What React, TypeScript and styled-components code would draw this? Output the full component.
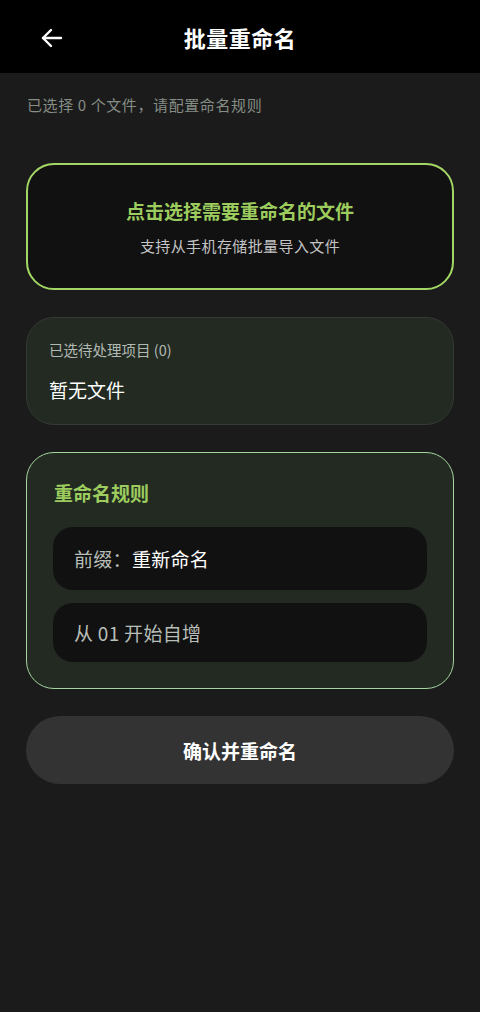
import React from 'react';
import styled, { createGlobalStyle } from 'styled-components';

const GlobalStyle = createGlobalStyle`
  html, body {
    margin: 0;
    padding: 0;
    background: #1b1b1b;
  }
  body {
    font-family: "Noto Sans CJK SC", "Noto Sans", sans-serif;
    -webkit-font-smoothing: antialiased;
  }
`;

const Page = styled.div`
  min-height: 1012px;
  background: #1b1b1b;
  display: flex;
  flex-direction: column;
`;

const Header = styled.header`
  height: 73px;
  background: #000;
  display: flex;
  align-items: center;
  position: relative;
  justify-content: center;
`;

const BackButton = styled.button`
  position: absolute;
  left: 38px;
  top: 24px;
  width: 28px;
  height: 28px;
  padding: 0;
  border: none;
  background: none;
  display: flex;
  align-items: center;
  justify-content: center;
  cursor: pointer;
`;

const Title = styled.h1`
  margin: 0;
  color: #fff;
  font-size: 22px;
  font-weight: 700;
  letter-spacing: 0.5px;
`;

const Body = styled.main`
  padding: 0 26px;
  display: flex;
  flex-direction: column;
`;

const Hint = styled.p`
  margin: 22px 0 0 1px;
  color: #858d85;
  font-size: 15px;
  line-height: 20px;
  letter-spacing: 0.6px;
`;

const PickCard = styled.div`
  margin-top: 48px;
  height: 127px;
  box-sizing: border-box;
  border: 2px solid #a3d765;
  border-radius: 28px;
  background: #111;
  display: flex;
  flex-direction: column;
  align-items: center;
  justify-content: center;
  gap: 12px;
  cursor: pointer;
`;

const PickTitle = styled.div`
  color: #9dcc5e;
  font-size: 19px;
  font-weight: 700;
  line-height: 26px;
`;

const PickSub = styled.div`
  color: #c4c4c4;
  font-size: 15px;
  line-height: 20px;
  letter-spacing: 0.4px;
`;

const Panel = styled.section<{ $accent?: boolean }>`
  box-sizing: border-box;
  background: #222a22;
  border: ${(p) => (p.$accent ? '1.5px solid #a6d6a0' : '1px solid #343a34')};
  border-radius: 28px;
  display: flex;
  flex-direction: column;
`;

const ListPanel = styled(Panel)`
  margin-top: 27px;
  height: 108px;
  padding: 22px 22px 0;
`;

const ListLabel = styled.div`
  color: #b2b9b2;
  font-size: 14.5px;
  line-height: 20px;
`;

const EmptyText = styled.div`
  margin-top: 17px;
  color: #fff;
  font-size: 19px;
  line-height: 26px;
`;

const RulePanel = styled(Panel)`
  margin-top: 27px;
  height: 237px;
  padding: 27px 26px 0 26px;
`;

const RuleTitle = styled.div`
  margin-left: 1px;
  color: #9dcc5e;
  font-size: 19px;
  font-weight: 700;
  line-height: 26px;
`;

const RuleRow = styled.div<{ $h: number }>`
  margin-top: ${(p) => (p.$h === 63 ? '21px' : '13px')};
  height: ${(p) => p.$h}px;
  border-radius: 20px;
  background: #111;
  display: flex;
  align-items: center;
  padding: 0 21px;
  font-size: 19px;
  letter-spacing: 0.3px;
`;

const RuleKey = styled.span`
  color: #b8beb8;
`;

const RuleValue = styled.span`
  color: #fff;
`;

const ConfirmButton = styled.button`
  margin-top: 27px;
  height: 68px;
  border: none;
  border-radius: 34px;
  background: #333;
  color: #fff;
  font-family: inherit;
  font-size: 19px;
  font-weight: 700;
  cursor: pointer;
`;

const BackIcon = () => (
  <svg width="24" height="24" viewBox="0 0 24 24" fill="none" stroke="#fff" strokeWidth="2.4" strokeLinecap="round" strokeLinejoin="round">
    <path d="M21 12H3" />
    <path d="M11 4l-8 8 8 8" />
  </svg>
);

export default function App() {
  return (
    <>
      <GlobalStyle />
      <Page>
        <Header>
          <BackButton aria-label="返回">
            <BackIcon />
          </BackButton>
          <Title>批量重命名</Title>
        </Header>
        <Body>
          <Hint>已选择 0 个文件，请配置命名规则</Hint>
          <PickCard>
            <PickTitle>点击选择需要重命名的文件</PickTitle>
            <PickSub>支持从手机存储批量导入文件</PickSub>
          </PickCard>
          <ListPanel>
            <ListLabel>已选待处理项目 (0)</ListLabel>
            <EmptyText>暂无文件</EmptyText>
          </ListPanel>
          <RulePanel $accent>
            <RuleTitle>重命名规则</RuleTitle>
            <RuleRow $h={63}>
              <RuleKey>前缀：</RuleKey>
              <RuleValue>重新命名</RuleValue>
            </RuleRow>
            <RuleRow $h={59}>
              <RuleKey>从 01 开始自增</RuleKey>
            </RuleRow>
          </RulePanel>
          <ConfirmButton>确认并重命名</ConfirmButton>
        </Body>
      </Page>
    </>
  );
}
